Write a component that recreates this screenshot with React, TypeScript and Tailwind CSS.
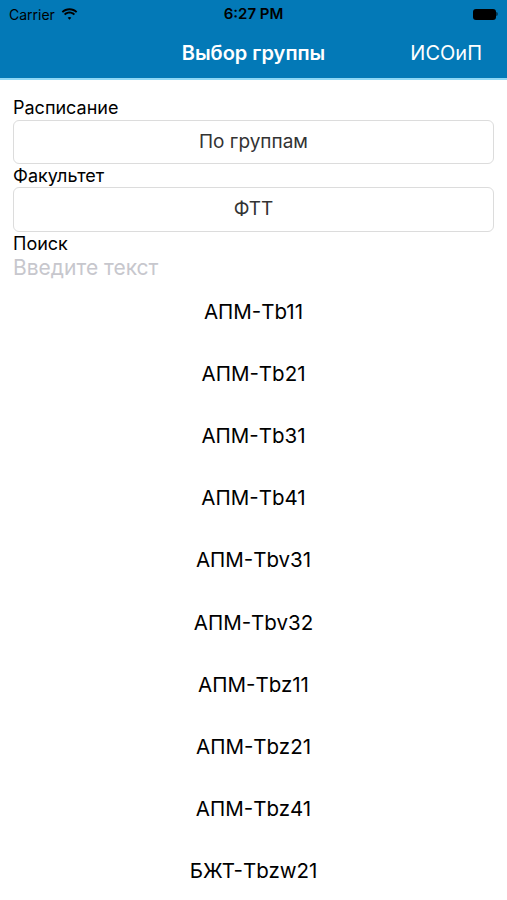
const groups = [
  "АПМ-Tb11",
  "АПМ-Tb21",
  "АПМ-Tb31",
  "АПМ-Tb41",
  "АПМ-Tbv31",
  "АПМ-Tbv32",
  "АПМ-Tbz11",
  "АПМ-Tbz21",
  "АПМ-Tbz41",
  "БЖТ-Tbzw21",
]

function Wifi() {
  return (
    <svg width="17" height="12" viewBox="0 0 17 12" fill="#000">
      <path d="M8.5 2.2c2.5 0 4.8 1 6.5 2.6l1.3-1.4C14.3 1.4 11.5.2 8.5.2S2.7 1.4.7 3.4L2 4.8c1.7-1.6 4-2.6 6.5-2.6z" />
      <path d="M8.5 5.6c1.6 0 3.1.6 4.2 1.7l1.3-1.4C12.6 4.5 10.6 3.6 8.5 3.6S4.4 4.5 3 5.9l1.3 1.4c1.1-1.1 2.6-1.7 4.2-1.7z" />
      <path d="M8.5 9c.7 0 1.3.3 1.8.7L8.5 11.7 6.7 9.7c.5-.4 1.1-.7 1.8-.7z" />
    </svg>
  )
}

export default function App() {
  return (
    <div className="min-h-[900px] w-[507px] bg-white font-['Inter',Arial,sans-serif] text-black">
      {/* Header */}
      <div className="bg-[#0379b7]">
        <div className="flex h-[28px] items-center justify-between px-[9px]">
          <div className="flex w-[120px] items-center gap-[6px] text-[14px] text-black">
            <span>Carrier</span>
            <Wifi />
          </div>
          <div className="text-[15px] font-semibold">6:27 PM</div>
          <div className="flex w-[120px] justify-end">
            <div className="flex items-center">
              <div className="h-[11px] w-[23px] rounded-[3px] bg-black" />
              <div className="h-[4px] w-[2px] rounded-r-sm bg-black/50" />
            </div>
          </div>
        </div>
        <div className="relative flex h-[50px] items-center justify-center">
          <span className="text-[20px] font-semibold text-white">Выбор группы</span>
          <span className="absolute right-[25px] text-[20px] text-white">ИСОиП</span>
        </div>
      </div>
      <div className="h-[2px] bg-[#8fd8f5]" />

      {/* Form */}
      <div className="px-[13px] pt-[18px]">
        <div className="text-[18px] leading-[20px]">Расписание</div>
        <div className="mt-[2px] flex h-[44px] items-center justify-center rounded-[6px] border border-[#dcdcdc] text-[19px] text-[#333]">
          По группам
        </div>
        <div className="mt-[2px] text-[18px] leading-[20px]">Факультет</div>
        <div className="mt-[1px] flex h-[45px] items-center justify-center rounded-[6px] border border-[#dcdcdc] text-[19px] text-[#333]">
          ФТТ
        </div>
        <div className="mt-[2px] text-[18px] leading-[20px]">Поиск</div>
        <div className="mt-[2px] text-[21px] leading-[24px] text-[#c7c7cd]">Введите текст</div>
      </div>

      {/* List */}
      <div className="mt-px">
        {groups.map((g) => (
          <div key={g} className="flex h-[62.2px] items-center justify-center text-[20.5px]">
            {g}
          </div>
        ))}
      </div>
    </div>
  )
}
